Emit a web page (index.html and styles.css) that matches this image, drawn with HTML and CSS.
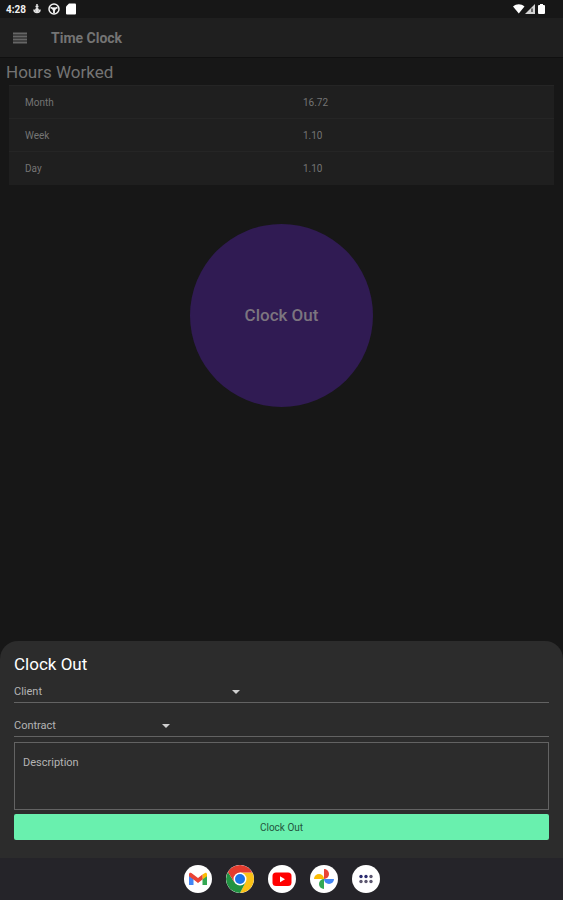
FILE: index.html
```
<!DOCTYPE html>
<html lang="en">
  <head>
    <meta charset="UTF-8" />
    <meta name="viewport" content="width=device-width, initial-scale=1.0" />
    <title>Time Clock</title>
    <link rel="stylesheet" href="styles.css">
  </head>
  <body>
    <div class="status-bar">
      <span class="time">4:28</span>
      <svg class="status-icon" viewBox="0 0 12 12">
        <path d="M6 1v9M4.500 3.500h3M3 6.500c0 4 6 4 6 0" fill="none" stroke="#e4e4e4" stroke-width="1.500" />
        <circle cx="6" cy="7" r="2" fill="#e4e4e4" />
      </svg>
      <svg class="status-icon" viewBox="0 0 12 12">
        <circle cx="6" cy="6" r="5" fill="none" stroke="#f4f4f4" stroke-width="1.500" />
        <path d="M2.500 4.500L5 5.500M9.500 4.500L7 5.500M6 7v3" stroke="#f4f4f4" stroke-width="1.800" />
        <circle cx="6" cy="6" r="1.800" fill="#f4f4f4" />
      </svg>
      <svg class="status-icon" viewBox="0 0 12 12">
        <path d="M4 0.500H10a1 1 0 0 1 1 1v9a1 1 0 0 1-1 1H2a1 1 0 0 1-1-1V3.500z" fill="#fff" />
      </svg>
      <svg class="signal" viewBox="0 0 34 12">
        <path d="M0 3.500C3.500 0.500 8 0.500 11.500 3.500L5.800 10.500z" fill="#fff" />
        <path d="M22 1v10H12z" fill="#d4d4d4" />
        <path d="M19 5.500v3.500" stroke="#444" stroke-width="1.500" />
        <path d="M27 1h3v1h1a1 1 0 0 1 1 1v7a1 1 0 0 1-1 1h-5a1 1 0 0 1-1-1V3a1 1 0 0 1 1-1h1z" fill="#fff" />
      </svg>
    </div>

    <header class="app-bar">
      <button type="button" class="menu" aria-label="Menu">
        <svg viewBox="0 0 14 12">
          <path d="M0 1.500h14M0 4.500h14M0 7.500h14M0 10.500h14" stroke="#666" stroke-width="2" />
        </svg>
      </button>
      <h1>Time Clock</h1>
    </header>

    <main>
      <h2>Hours Worked</h2>
      <table class="hours">
        <tr>
          <th scope="row">Month</th>
          <td>16.72</td>
        </tr>
        <tr>
          <th scope="row">Week</th>
          <td>1.10</td>
        </tr>
        <tr>
          <th scope="row">Day</th>
          <td>1.10</td>
        </tr>
      </table>
      <button type="button" class="clock">Clock Out</button>
    </main>

    <form class="sheet">
      <h2>Clock Out</h2>
      <div class="field">
        <div class="picker client">
          <select aria-label="Client">
            <option>Client</option>
          </select>
        </div>
      </div>
      <div class="field">
        <div class="picker contract">
          <select aria-label="Contract">
            <option>Contract</option>
          </select>
        </div>
      </div>
      <textarea aria-label="Description" placeholder="Description"></textarea>
      <button type="button" class="submit">Clock Out</button>
    </form>

    <nav class="dock">
      <a href="#" aria-label="Gmail">
        <svg viewBox="0 0 28 28">
          <path d="M5 10v10h4.500v-7z" fill="#4285f4" />
          <path d="M23 10v10h-4.500v-7z" fill="#34a853" />
          <path d="M18.500 9.500l2.500-1.600c1-.6 2 .2 2 1.300v2l-4.500 3.300z" fill="#fbbc04" />
          <path d="M5 9.500C5 7.800 6.200 7.300 7.400 8.100L14 13l4.500-3.500v5L14 18l-4.500-3.500L5 11.200z" fill="#ea4335" />
        </svg>
      </a>
      <a href="#" aria-label="Chrome">
        <svg viewBox="0 0 28 28">
          <path d="M14 7.500h12.400A14 14 0 0 1 14 28l5.600-10.700z" fill="#fbc116" />
          <path d="M8.400 17.200L1.900 7A14 14 0 0 0 14 28l5.600-10.700z" fill="#229342" />
          <path d="M14 7.500h12.400A14 14 0 0 0 1.900 7l6.500 10.200z" fill="#e33b2e" />
          <circle cx="14" cy="14" r="6.500" fill="#fff" />
          <circle cx="14" cy="14" r="5" fill="#1a73e8" />
        </svg>
      </a>
      <a href="#" aria-label="YouTube">
        <svg viewBox="0 0 28 28">
          <rect x="4.500" y="7.500" width="19" height="13.500" rx="3.500" fill="#f00" />
          <path d="M12 11.300v6l5-3z" fill="#fff" />
        </svg>
      </a>
      <a href="#" aria-label="Photos">
        <svg viewBox="0 0 28 28">
          <path d="M14 14V4a5 5 0 0 1 0 10z" fill="#ea4335" />
          <path d="M14 14h10a5 5 0 0 1-10 0z" fill="#4285f4" />
          <path d="M14 14v10a5 5 0 0 1 0-10z" fill="#34a853" />
          <path d="M14 14H4a5 5 0 0 1 10 0z" fill="#fbbc04" />
        </svg>
      </a>
      <a href="#" aria-label="All apps">
        <svg viewBox="0 0 28 28">
          <g fill="#2b2c70">
            <circle cx="9" cy="11.500" r="1.700" />
            <circle cx="14" cy="11.500" r="1.700" />
          </g>
          <g fill="#5d5870">
            <circle cx="19" cy="11.500" r="1.700" />
            <circle cx="9" cy="16.500" r="1.700" />
            <circle cx="14" cy="16.500" r="1.700" />
            <circle cx="19" cy="16.500" r="1.700" />
          </g>
        </svg>
      </a>
    </nav>
  </body>
</html>
```
FILE: styles.css
```
* {
  box-sizing: border-box;
}

body {
  margin: 0;
  min-height: 100vh;
  display: flex;
  flex-direction: column;
  background-color: #171717;
  color: #747474;
  font-family: Roboto, sans-serif;
  font-size: 11px;
}

button,
select,
textarea {
  font-family: inherit;
  font-size: inherit;
}

h1,
h2 {
  margin: 0;
}

.status-bar {
  display: flex;
  align-items: center;
  gap: 5px;
  height: 18px;
  padding: 0 16px 0 6px;
  color: #f0f0f0;
}

.time {
  font-size: 10px;
  font-weight: 700;
}

.status-icon {
  width: 12px;
  height: 12px;
}

.signal {
  width: 34px;
  height: 12px;
  margin-left: auto;
}

.app-bar {
  display: flex;
  align-items: center;
  gap: 24px;
  height: 40px;
  padding: 0 13px;
  background-color: #1f1f1f;
  border-bottom: 1px solid #101010;
}

.app-bar h1 {
  font-size: 14px;
  font-weight: 700;
}

.menu {
  width: 14px;
  padding: 0;
  border: none;
  background: none;
  cursor: pointer;
}

.menu svg {
  display: block;
  height: 12px;
}

main {
  flex: 1;
  display: flex;
  flex-direction: column;
  padding-top: 4px;
}

main h2 {
  padding: 0 6px;
  font-size: 17px;
  font-weight: 400;
  line-height: 20px;
}

.hours {
  margin: 3px 9px 0;
  border-collapse: collapse;
  background-color: #1f1f1f;
  font-size: 10px;
}

.hours tr {
  height: 33px;
  border-top: 1px solid #252525;
}

.hours th,
.hours td {
  padding: 0 16px;
  text-align: left;
  font-weight: 400;
}

.hours th {
  width: 51%;
}

.clock {
  align-self: center;
  width: 183px;
  height: 183px;
  margin: 39px 0;
  border: none;
  border-radius: 50%;
  background-color: #301b53;
  color: #7c757f;
  font-size: 17px;
  font-weight: 500;
  cursor: pointer;
}

.sheet {
  display: flex;
  flex-direction: column;
  padding: 13px 14px 18px;
  border-radius: 18px 18px 0 0;
  background-color: #2c2c2c;
  color: #b4b4b4;
}

.sheet h2 {
  color: #fff;
  font-size: 17px;
  font-weight: 400;
  line-height: 20px;
}

.field {
  height: 29px;
  margin-bottom: 5px;
  border-bottom: 1px solid #636363;
}

.picker {
  display: flex;
  align-items: center;
  height: 100%;
  padding-top: 7px;
}

.picker::after {
  content: "";
  border: 4px solid transparent;
  border-top-color: #d0d0d0;
  border-bottom: none;
}

.client {
  width: 226px;
}

.contract {
  width: 156px;
}

select {
  flex: 1;
  padding: 0;
  border: none;
  background: none;
  color: inherit;
  appearance: none;
}

textarea {
  height: 68px;
  padding: 13px 8px;
  border: 1px solid #636363;
  background: none;
  color: inherit;
  resize: none;
}

textarea::placeholder {
  color: #b4b4b4;
}

.submit {
  height: 26px;
  margin-top: 4px;
  border: none;
  border-radius: 2px;
  background-color: #69f0ae;
  color: #24553d;
  font-size: 10px;
  cursor: pointer;
}

.dock {
  display: flex;
  justify-content: center;
  align-items: center;
  gap: 14px;
  height: 42px;
  background-color: #252429;
}

.dock a {
  width: 28px;
  height: 28px;
  border-radius: 50%;
  background-color: #fff;
  overflow: hidden;
}

.dock svg {
  display: block;
}
```
